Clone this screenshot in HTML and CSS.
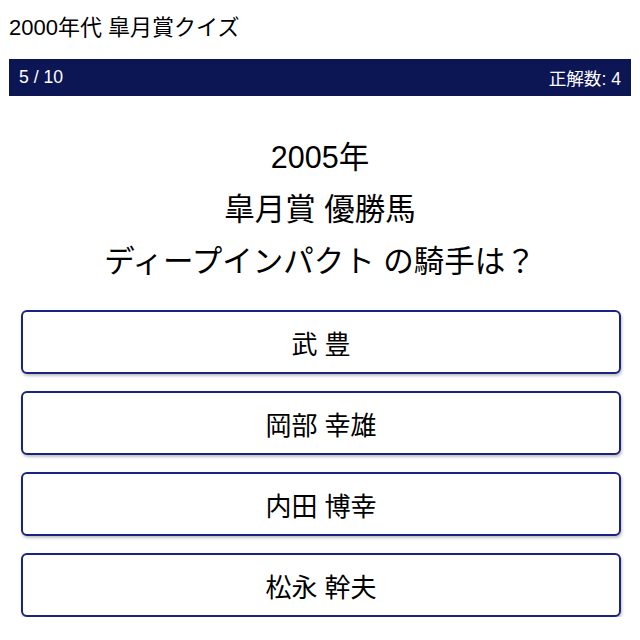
FILE: index.html
```html
<!DOCTYPE html>
<html lang="ja">
<head>
<meta charset="utf-8">
<link rel="stylesheet" href="styles.css">
</head>
<body>
<div class="page">
  <h1 class="title">2000年代 皐月賞クイズ</h1>
  <div class="status">
    <span>5 / 10</span>
    <span>正解数: 4</span>
  </div>
  <div class="question">
    <div>2005年</div>
    <div>皐月賞 優勝馬</div>
    <div>ディープインパクト の騎手は？</div>
  </div>
  <div class="choices">
    <button class="choice">武 豊</button>
    <button class="choice">岡部 幸雄</button>
    <button class="choice">内田 博幸</button>
    <button class="choice">松永 幹夫</button>
  </div>
</div>
</body>
</html>
```
FILE: styles.css
```css
html, body {
  margin: 0;
  padding: 0;
  background: #fff;
}
body {
  font-family: "Liberation Sans", "Noto Sans CJK JP", sans-serif;
  color: #000;
}
.page {
  padding: 0 9px;
}
.title {
  margin: 0;
  padding-top: 14px;
  font-size: 22px;
  font-weight: normal;
  line-height: 28px;
  height: 45px;
}
.status {
  display: flex;
  justify-content: space-between;
  align-items: center;
  height: 37px;
  padding: 0 10px;
  background: #0d1654;
  color: #fff;
  font-size: 17.6px;
}
.question {
  margin-top: 35px;
  text-align: center;
  font-size: 30.5px;
  line-height: 52px;
}
.choices {
  display: flex;
  flex-direction: column;
  gap: 17px;
  width: 600px;
  margin: 23px 0 0 12px;
}
.choice {
  height: 64px;
  background: #fff;
  border: 2px solid #1a237e;
  border-radius: 6px;
  box-shadow: 1px 2px 3px rgba(0,0,0,0.25);
  font-family: "Liberation Sans", "Noto Sans CJK JP", sans-serif;
  font-size: 26px;
  color: #000;
  padding: 0;
}
```
